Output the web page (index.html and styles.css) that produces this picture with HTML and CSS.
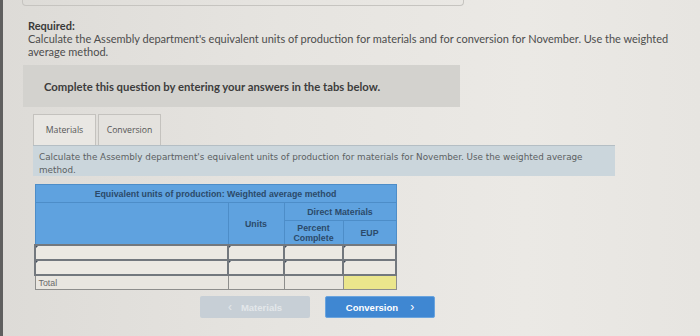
FILE: index.html
```html
<!DOCTYPE html>
<html lang="en">
<head>
    <meta charset="UTF-8">
    <meta name="viewport" content="width=device-width, initial-scale=1.0">
    <title>Equivalent Units of Production</title>
    <link rel="stylesheet" href="styles.css">
</head>
<body>

    <div class="page">
        <div class="prev-box"></div>

        <div class="required">
            <strong>Required:</strong>
            <p>Calculate the Assembly department's equivalent units of production for materials and for conversion for November. Use the weighted average method.</p>
        </div>

        <div class="notice">Complete this question by entering your answers in the tabs below.</div>

        <div class="tabs">
            <div class="tab active">Materials</div>
            <div class="tab">Conversion</div>
        </div>

        <div class="prompt">Calculate the Assembly department's equivalent units of production for materials for November. Use the weighted average method.</div>

        <table class="eup">
            <colgroup>
                <col class="c-label">
                <col class="c-units">
                <col class="c-pct">
                <col class="c-eup">
            </colgroup>
            <tr class="h-title">
                <th colspan="4">Equivalent units of production: Weighted average method</th>
            </tr>
            <tr class="h-group">
                <th rowspan="2"></th>
                <th rowspan="2">Units</th>
                <th colspan="2">Direct Materials</th>
            </tr>
            <tr class="h-sub">
                <th>Percent<br>Complete</th>
                <th>EUP</th>
            </tr>
            <tr class="row-input">
                <td class="input"></td>
                <td class="input"></td>
                <td class="input"></td>
                <td class="input"></td>
            </tr>
            <tr class="row-input">
                <td class="input"></td>
                <td class="input"></td>
                <td class="input"></td>
                <td class="input"></td>
            </tr>
            <tr class="row-total">
                <td>Total</td>
                <td></td>
                <td></td>
                <td class="answer"></td>
            </tr>
        </table>

        <div class="nav">
            <button class="btn prev"><span class="chev">&lsaquo;</span>Materials</button>
            <button class="btn next">Conversion<span class="chev right">&rsaquo;</span></button>
        </div>
    </div>

</body>
</html>
```

FILE: styles.css
```css
html, body {
    margin: 0;
    height: 100%;
}
body {
    background: linear-gradient(90deg, #dddbd7 0%, #e6e4e0 40%, #ebe9e5 75%, #e7e5e1 100%);
    border-left: 3px solid #5f5f5f;
    box-sizing: border-box;
    font-family: Lato, 'Open Sans', sans-serif;
    color: #4a4a4a;
    overflow: hidden;
}
.prev-box {
    margin-left: 19px;
    width: 440px;
    height: 5px;
    border: 1px solid #c6c4c0;
    border-top: none;
    border-radius: 0 0 4px 4px;
}
.required {
    margin: 13px 20px 0 25px;
    font-size: 11px;
    line-height: 13px;
    color: #4d4d4d;
}
.required strong {
    color: #3a3a3a;
}
.required p {
    margin: 0;
}
.notice {
    margin: 7px 0 0 20px;
    width: 437px;
    height: 42px;
    box-sizing: border-box;
    padding-left: 21px;
    display: flex;
    align-items: center;
    background-color: #d3d2ce;
    font-size: 11.3px;
    font-weight: bold;
    color: #3c3c3c;
}
.tabs {
    display: flex;
    gap: 2px;
    margin: 7px 0 0 30px;
}
.tab {
    width: 63px;
    height: 31px;
    box-sizing: border-box;
    display: flex;
    align-items: center;
    justify-content: center;
    background-color: #e4e2de;
    border: 1px solid #c4c2be;
    border-bottom: none;
    font-family: 'Open Sans', sans-serif;
    font-size: 8.7px;
    color: #555;
}
.tab.active {
    background-color: #e9e7e3;
}
.prompt {
    margin-left: 30px;
    width: 582px;
    height: 31px;
    box-sizing: border-box;
    padding: 5px 6px 0 6px;
    background-color: #cbd6dc;
    border-top: 1px solid #b4bec4;
    font-family: 'DejaVu Sans', sans-serif;
    font-size: 8.8px;
    line-height: 13px;
    color: #5b5f62;
}
.eup {
    margin: 8px 0 0 31px;
    width: 361px;
    border-collapse: collapse;
    table-layout: fixed;
    font-family: 'Liberation Sans', Arial, sans-serif;
    font-size: 8.8px;
}
.c-label { width: 193px; }
.c-units { width: 56px; }
.c-pct { width: 59px; }
.c-eup { width: 53px; }
.eup th {
    background-color: #5fa2df;
    border: 1px solid #4d8dc8;
    color: #2b4a6a;
    font-weight: bold;
    padding: 0;
    line-height: 10px;
}
.h-title th {
    height: 17px;
}
.h-group th {
    height: 17px;
}
.h-sub th {
    height: 23px;
}
.eup td {
    background-color: #e9e6e0;
    border: 1px solid #8e8e8c;
    height: 13px;
    padding: 0 3px;
    color: #6a6a6a;
}
.eup td.input {
    position: relative;
    border: 2px solid #73787e;
    background-color: #ece9e3;
}
.eup td.input::before {
    content: "";
    position: absolute;
    left: 0;
    top: 0;
    border-top: 2px solid #3e4a5a;
    border-right: 2px solid transparent;
}
.eup td.answer {
    background-color: #ebe68c;
}
.nav {
    display: flex;
    gap: 15px;
    margin: 6px 0 0 197px;
}
.btn {
    width: 110px;
    height: 22px;
    border: none;
    border-radius: 2px;
    font-family: 'Liberation Sans', Arial, sans-serif;
    font-size: 9.5px;
    font-weight: bold;
    padding: 0;
    display: flex;
    align-items: center;
    justify-content: center;
}
.chev {
    font-size: 12px;
    font-weight: normal;
    margin-right: 9px;
}
.chev.right {
    margin: 0 0 0 12px;
}
.prev {
    background-color: #c7cfd6;
    color: #e3e7ea;
}
.next {
    background-color: #3f87d2;
    color: #ffffff;
    border: 1px solid #6aa4de;
}
```
